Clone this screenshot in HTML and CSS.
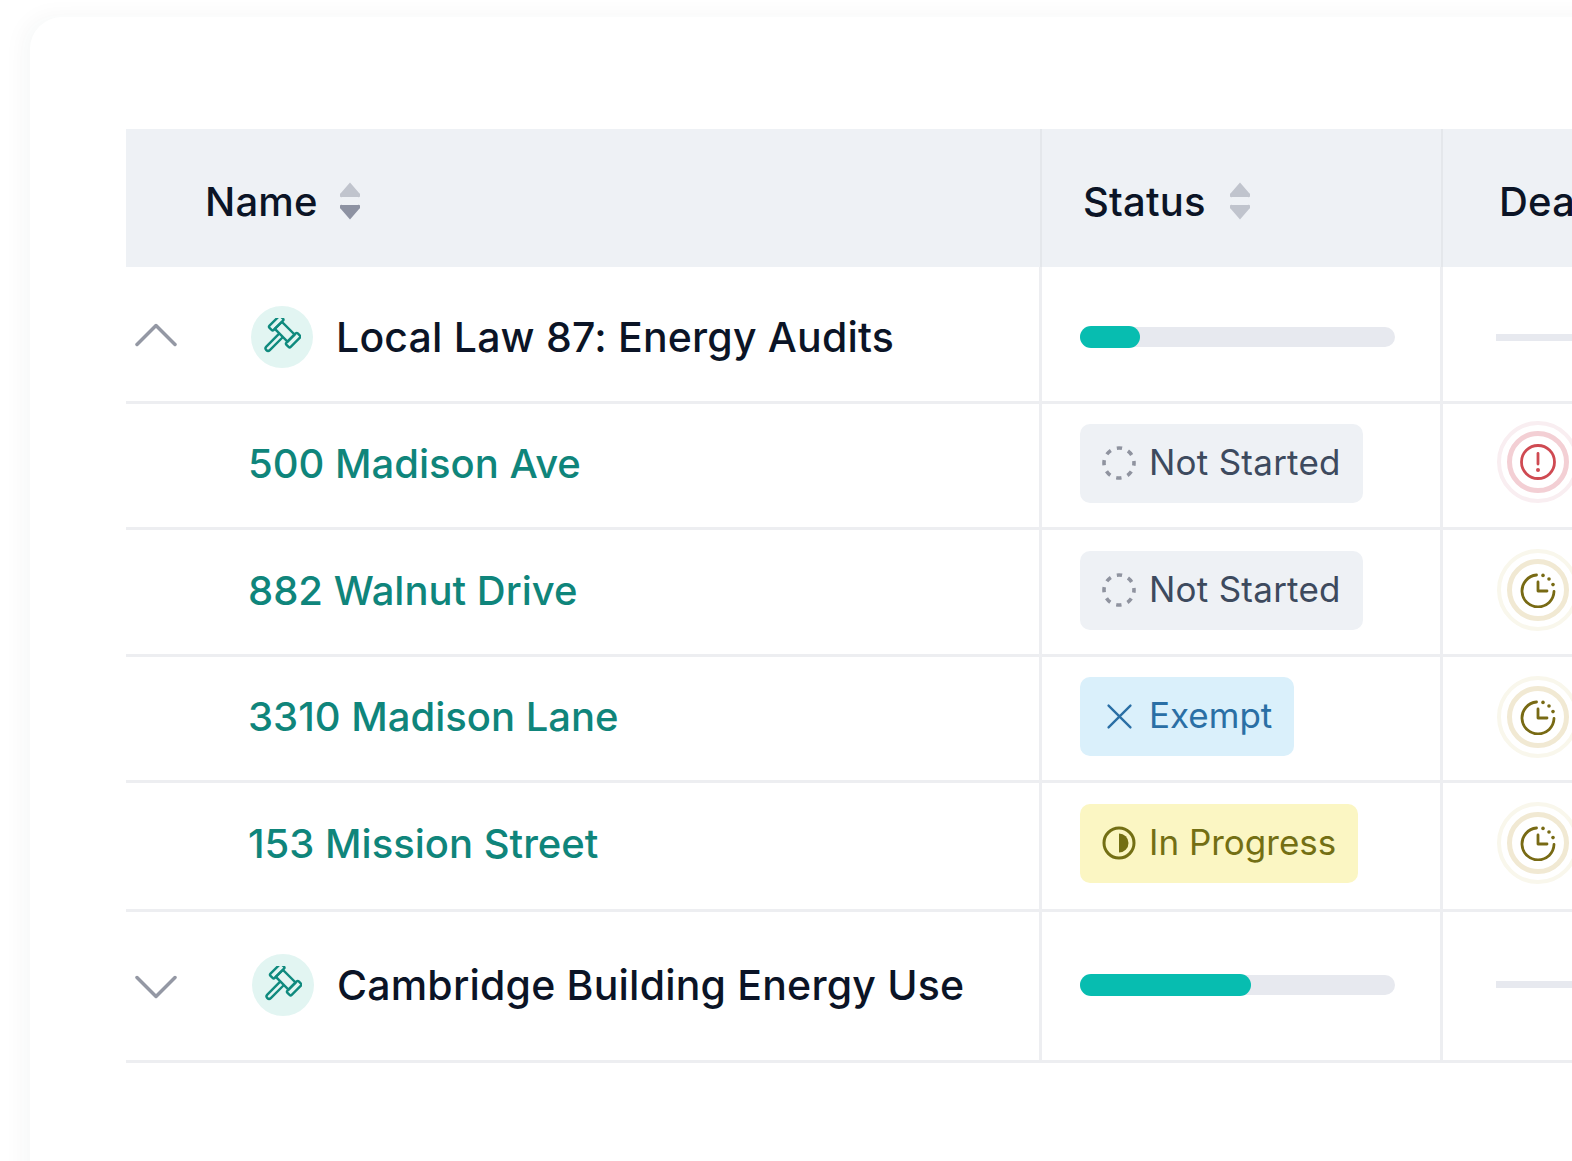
FILE: index.html
```html
<!DOCTYPE html>
<html lang="en">
<head>
<meta charset="utf-8">
<title>Compliance table</title>
<link rel="stylesheet" href="styles.css">
</head>
<body>
<svg class="defs" width="0" height="0" aria-hidden="true">
  <symbol id="gavel" viewBox="0 0 38 38">
    <g transform="translate(21.700 13.700) rotate(45)" fill="none" stroke="currentColor" stroke-width="2.400" stroke-linejoin="round">
      <rect x="-15" y="-8" width="6" height="16" rx="1.500"/>
      <rect x="9" y="-8" width="6" height="16" rx="1.500"/>
      <path d="M-9 -5H9V5H-9Z"/>
      <path d="M-2.500 5V23.500a2.500 2.500 0 0 0 5 0V5"/>
    </g>
  </symbol>
  <symbol id="clock" viewBox="0 0 36 36">
    <g fill="none" stroke="currentColor" stroke-width="2.800" stroke-linecap="round" stroke-linejoin="round">
      <path d="M34 19.500A16 16 0 1 1 16.500 3"/>
      <path d="M18 10V19H27"/>
    </g>
    <g fill="currentColor">
      <circle cx="23" cy="3.400" r="1.800"/>
      <circle cx="29" cy="7" r="1.800"/>
      <circle cx="33" cy="12.600" r="1.800"/>
    </g>
  </symbol>
  <symbol id="alert" viewBox="0 0 36 36">
    <circle cx="18" cy="18" r="16.500" fill="none" stroke="currentColor" stroke-width="2.800"/>
    <path d="M18 9.500V20" fill="none" stroke="currentColor" stroke-width="2.800" stroke-linecap="round"/>
    <circle cx="18" cy="26" r="2" fill="currentColor"/>
  </symbol>
  <symbol id="sort" viewBox="0 0 20 38">
    <path class="sort-up" d="M10 0.500 19.300 11.300a2 2 0 0 1-1.500 3.700H2.200a2 2 0 0 1-1.500-3.700Z"/>
    <path class="sort-down" d="M10 37.500 19.300 26.700a2 2 0 0 0-1.500-3.700H2.200a2 2 0 0 0-1.500 3.700Z"/>
  </symbol>
  <symbol id="dashed" viewBox="0 0 34 34">
    <circle cx="17" cy="17" r="15" fill="none" stroke="currentColor" stroke-width="3.600" stroke-dasharray="5.400 6.380" stroke-dashoffset="2.700"/>
  </symbol>
</svg>

<main class="card">
  <div class="table">
    <div class="row row-head">
      <div class="cell cell-name cell-head-name">
        <span>Name</span>
        <svg class="sort sort-active"><use href="#sort"/></svg>
      </div>
      <div class="cell cell-status cell-head-status">
        <span>Status</span>
        <svg class="sort"><use href="#sort"/></svg>
      </div>
      <div class="cell cell-deadline cell-head-deadline"><span>Deadline</span></div>
    </div>

    <div class="row row-group row-group-first">
      <div class="cell cell-name group-name">
        <svg class="chevron" viewBox="0 0 42 24"><path d="M2 21.500 21 2.500 40 21.500"/></svg>
        <span class="gavel-wrap"><svg class="gavel"><use href="#gavel"/></svg></span>
        <span class="group-title">Local Law 87: Energy Audits</span>
      </div>
      <div class="cell cell-status"><div class="track"><div class="fill" style="width:60px"></div></div></div>
      <div class="cell cell-deadline"><div class="mini-track"></div></div>
    </div>

    <div class="row row-item">
      <div class="cell cell-name"><a class="item-link">500 Madison Ave</a></div>
      <div class="cell cell-status">
        <span class="badge badge-grey"><svg class="badge-icon"><use href="#dashed"/></svg>Not Started</span>
      </div>
      <div class="cell cell-deadline">
        <span class="rings rings-red"><span class="ring-mid"><svg class="ring-icon"><use href="#alert"/></svg></span></span>
      </div>
    </div>

    <div class="row row-item">
      <div class="cell cell-name"><a class="item-link">882 Walnut Drive</a></div>
      <div class="cell cell-status">
        <span class="badge badge-grey"><svg class="badge-icon"><use href="#dashed"/></svg>Not Started</span>
      </div>
      <div class="cell cell-deadline">
        <span class="rings rings-olive"><span class="ring-mid"><svg class="ring-icon"><use href="#clock"/></svg></span></span>
      </div>
    </div>

    <div class="row row-item">
      <div class="cell cell-name"><a class="item-link">3310 Madison Lane</a></div>
      <div class="cell cell-status">
        <span class="badge badge-blue">
          <svg class="badge-icon" viewBox="0 0 34 34"><path d="M5 5 29 29M29 5 5 29" fill="none" stroke="currentColor" stroke-width="2.600" stroke-linecap="round"/></svg>Exempt</span>
      </div>
      <div class="cell cell-deadline">
        <span class="rings rings-olive"><span class="ring-mid"><svg class="ring-icon"><use href="#clock"/></svg></span></span>
      </div>
    </div>

    <div class="row row-item row-item-last">
      <div class="cell cell-name"><a class="item-link">153 Mission Street</a></div>
      <div class="cell cell-status">
        <span class="badge badge-yellow">
          <svg class="badge-icon" viewBox="0 0 34 34"><circle cx="17" cy="17" r="15" fill="none" stroke="currentColor" stroke-width="3"/><path d="M17 7.500a9.500 9.500 0 0 1 0 19Z" fill="currentColor"/></svg>In Progress</span>
      </div>
      <div class="cell cell-deadline">
        <span class="rings rings-olive"><span class="ring-mid"><svg class="ring-icon"><use href="#clock"/></svg></span></span>
      </div>
    </div>

    <div class="row row-group row-group-last">
      <div class="cell cell-name group-name">
        <svg class="chevron" viewBox="0 0 42 24"><path d="M2 2.500 21 21.500 40 2.500"/></svg>
        <span class="gavel-wrap"><svg class="gavel"><use href="#gavel"/></svg></span>
        <span class="group-title">Cambridge Building Energy Use</span>
      </div>
      <div class="cell cell-status"><div class="track"><div class="fill" style="width:171px"></div></div></div>
      <div class="cell cell-deadline"><div class="mini-track"></div></div>
    </div>
  </div>
</main>
</body>
</html>
```
FILE: styles.css
```css
html, body {
  margin: 0;
  height: 1161px;
  overflow: hidden;
  background: #fff;
}
body {
  padding: 17px 0 0 30px;
  box-sizing: border-box;
  font-family: Inter, "Noto Sans", "Liberation Sans", sans-serif;
  font-weight: 450;
}
.defs { display: block; height: 0; width: 0; }

.card {
  width: 1700px;
  height: 1300px;
  padding: 112px 0 0 96px;
  box-sizing: border-box;
  background: #fff;
  border-radius: 32px;
  box-shadow: -8px -2px 22px rgba(40, 50, 70, 0.035);
}

.row {
  display: grid;
  grid-template-columns: 916px 401px 1fr;
  border-bottom: 3px solid #edeef1;
  box-sizing: border-box;
}
.row-head { height: 138px; background: #eef1f5; border-bottom: 0; }
.row-group-first { height: 137px; }
.row-item { height: 126px; }
.row-item:nth-child(4) { height: 127px; }
.row-item-last { height: 129px; }
.row-group-last { height: 151px; }

.cell {
  display: flex;
  align-items: center;
  box-sizing: border-box;
  min-width: 0;
}
.cell-name, .cell-status { border-right: 3px solid #edeef1; }
.row-head .cell-name, .row-head .cell-status { border-right: 2px solid #e4e7eb; }

.row-group-first .cell { padding-top: 6px; }
.row-group-last .cell { padding-bottom: 3px; }
.row-item .cell { padding-bottom: 4px; }
.row-item-last .cell { padding-bottom: 5px; }
.row-group-first .chevron { margin-bottom: 5px; }
.row-group-last .chevron { margin-top: 4px; }
.row-group-last .gavel-wrap { margin-left: 75px; }

.row-head .cell {
  font-size: 40px;
  letter-spacing: 0.2px;
  color: #0b1426;
  padding-top: 7px;
}
.cell-head-name { padding-left: 79px; gap: 22px; }
.row-head .cell-head-status { padding-left: 41px; gap: 24px; }
.cell-head-deadline { padding-left: 56px; white-space: nowrap; }

.sort {
  width: 20px;
  height: 38px;
  margin-bottom: 2px;
  --sort-down: #c0c4cd;
}
.sort-active { --sort-down: #8d92a2; }
.sort-up { fill: #c0c4cd; }
.sort-down { fill: var(--sort-down); }

.group-name { padding-left: 9px; }
.chevron {
  width: 42px;
  height: 24px;
  fill: none;
  stroke: #9498a4;
  stroke-width: 3.500;
  stroke-linecap: round;
  stroke-linejoin: round;
  flex: none;
}
.gavel-wrap {
  width: 62px;
  height: 62px;
  margin-left: 74px;
  border-radius: 50%;
  background: #e2f5f2;
  color: #0f8a7e;
  display: flex;
  align-items: center;
  justify-content: center;
  flex: none;
}
.gavel { width: 38px; height: 38px; }
.group-title {
  margin-left: 23px;
  font-size: 41px;
  letter-spacing: 0.2px;
  color: #0b1426;
  white-space: nowrap;
}

.item-link {
  margin-left: 122px;
  font-size: 40px;
  color: #0f857b;
  white-space: nowrap;
}

.cell-status { padding-left: 38px; }
.track {
  width: 315px;
  height: 20px;
  border-radius: 10px;
  background: #e7e9ef;
  display: flex;
  align-items: center;
}
.fill { height: 22px; border-radius: 11px; background: #07bdb0; flex: none; }

.mini-track { width: 120px; height: 7px; margin-left: 53px; background: #e7e9ef; }

.badge {
  display: inline-flex;
  align-items: center;
  height: 79px;
  padding: 0 22px 3px 22px;
  gap: 13px;
  border-radius: 10px;
  font-size: 35px;
  font-weight: 430;
  white-space: nowrap;
  box-sizing: border-box;
}
.badge-icon { width: 34px; height: 34px; flex: none; margin-top: 2px; }
.badge-grey { background: #eef1f5; color: #3d4a5e; letter-spacing: 0.25px; }
.badge-grey .badge-icon { color: #8f939f; }
.badge-blue { background: #daf0fb; color: #2a6fa5; }
.badge-blue .badge-icon { width: 31px; height: 31px; margin: 3px 1px 0 2px; }
.badge-yellow { background: #fbf6c3; color: #736f14; }

.rings {
  width: 82px;
  height: 82px;
  margin-left: 54px;
  border-radius: 50%;
  display: flex;
  align-items: center;
  justify-content: center;
  flex: none;
  border: 4px solid;
  box-sizing: border-box;
}
.ring-mid {
  width: 62px;
  height: 62px;
  border-radius: 50%;
  border: 5px solid;
  display: flex;
  align-items: center;
  justify-content: center;
  box-sizing: border-box;
}
.ring-icon { width: 36px; height: 36px; }
.rings-red { border-color: #f9eef1; color: #cf4a52; margin-bottom: 4px; }
.rings-red .ring-mid { border-color: #f3cfd4; }
.rings-olive { border-color: #f9f7ec; color: #786a14; }
.rings-olive .ring-mid { border-color: #f1e9d3; }
.row-item-last .rings { margin-bottom: 2px; }
```
